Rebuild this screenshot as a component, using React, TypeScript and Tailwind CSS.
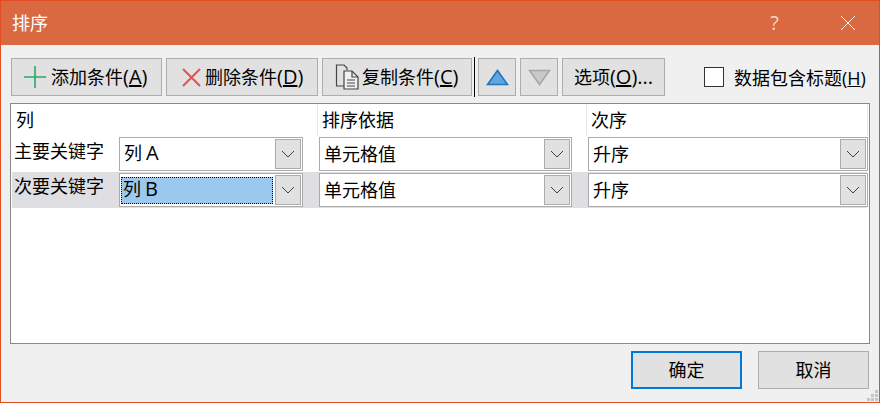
import React from 'react';

const font = { fontFamily: '"Noto Sans CJK SC", sans-serif' };

// latin letters sit a bit larger than the CJK text in the reference
const Lat: React.FC<{ children: React.ReactNode }> = ({ children }) => (
  <span className="text-[20px] leading-none" style={{ fontFamily: '"Open Sans", sans-serif' }}>{children}</span>
);

const ToolButton: React.FC<{ className: string; children: React.ReactNode }> = ({ className, children }) => (
  <button className={`h-[38px] shrink-0 flex items-center border border-[#adadad] bg-[#e1e1e1] text-[18px] leading-none text-black ${className}`}>
    {children}
  </button>
);

const Chevron = () => (
  <svg width="14" height="8" viewBox="0 0 14 8" fill="none" stroke="#404040" strokeWidth="1">
    <path d="M1 1l6 6 6-6" />
  </svg>
);

const Combo: React.FC<{ children: React.ReactNode; className: string; selected?: boolean }> = ({ children, className, selected }) => (
  <div className={`h-[34px] shrink-0 flex items-center border border-[#ababab] bg-white ${className}`}>
    <div className="flex-1 h-full flex items-center pl-[1px]">
      {selected ? (
        <span className="w-[152px] h-[27px] flex items-center pl-[2px] pb-[2px] bg-[#9bc8ee] outline-1 -outline-offset-1 outline-dotted outline-black text-[18px] leading-none text-black whitespace-pre">
          <span>{children}</span>
        </span>
      ) : (
        <span className="pl-[3px] pb-[2px] text-[18px] leading-none text-black whitespace-pre">{children}</span>
      )}
    </div>
    <div className="w-[26px] h-[30px] mr-[1px] flex items-center justify-center border border-[#ababab] bg-[#e1e1e1]">
      <Chevron />
    </div>
  </div>
);

const Row: React.FC<{ label: string; col: React.ReactNode; className: string; labelClass: string; selected?: boolean }> = ({ label, col, className, labelClass, selected }) => (
  <div className={`flex items-center ${className}`}>
    <span className={`shrink-0 text-[18px] leading-none text-black ${labelClass}`}>{label}</span>
    <Combo className="w-[184px] mr-[16px]" selected={selected}>{col}</Combo>
    <Combo className="w-[253px] mr-[16px]">单元格值</Combo>
    <Combo className="w-[280px]">升序</Combo>
  </div>
);

export default function App() {
  return (
    <div style={font} className="w-[880px] h-[403px] flex flex-col border border-[#e04e21] bg-[#f0f0f0] overflow-hidden">
      {/* Title bar */}
      <div className="h-[44px] shrink-0 flex items-center bg-[#da6841] text-white">
        <span className="ml-[11px] pb-[2px] text-[18px] leading-none">排序</span>
        <span className="ml-auto mr-[61px] text-[20px] leading-none text-[#f4d8cd]" style={{ fontFamily: '"Open Sans", sans-serif' }}>?</span>
        <svg className="mr-[23px]" width="16" height="16" viewBox="0 0 16 16" fill="none" stroke="white" strokeWidth="1">
          <path d="M1 1l14 14M15 1L1 15" />
        </svg>
      </div>

      {/* Toolbar */}
      <div className="mt-[13px] ml-[10px] flex items-center">
        <ToolButton className="w-[151px] pl-[12px]">
          <svg className="mr-[5px]" width="22" height="22" viewBox="0 0 22 22" fill="none" stroke="#2aa866" strokeWidth="1.6">
            <path d="M11 0v22M0 11h22" />
          </svg>
          <span>添加条件<Lat>(<u>A</u>)</Lat></span>
        </ToolButton>
        <ToolButton className="w-[152px] ml-[4px] pl-[15px]">
          <svg className="mr-[4px]" width="19" height="19" viewBox="0 0 19 19" fill="none" stroke="#e8504f" strokeWidth="2">
            <path d="M1 1l17 17M18 1L1 18" />
          </svg>
          <span>删除条件<Lat>(<u>D</u>)</Lat></span>
        </ToolButton>
        <ToolButton className="w-[150px] ml-[4px] pl-[12px]">
          <svg className="mr-[3px]" width="24" height="26" viewBox="0 0 24 26" fill="none" stroke="#444" strokeWidth="1.2">
            <path d="M9 22H1.5V1h7.5l3 3v2" />
            <path d="M9 7h8l6 6v12H9z" fill="#f0f0f0" />
            <path d="M17 7v6h6" />
            <path d="M12 16h8M12 19h8M12 22h8" />
          </svg>
          <span>复制条件<Lat>(<u>C</u>)</Lat></span>
        </ToolButton>
        <div className="w-[1px] h-[40px] -my-[1px] ml-[2px] mr-[3px] bg-black" />
        <ToolButton className="w-[38px] justify-center">
          <svg width="23" height="17" viewBox="0 0 23 17">
            <path d="M11.5 1.5L21.5 15.5H1.5z" fill="#5ba6e4" stroke="#2474b8" strokeWidth="1.6" />
          </svg>
        </ToolButton>
        <ToolButton className="w-[38px] ml-[4px] justify-center">
          <svg width="23" height="17" viewBox="0 0 23 17">
            <path d="M1.5 1.5H21.5L11.5 15.5z" fill="#c8c8c8" stroke="#a8a8a8" strokeWidth="1.6" />
          </svg>
        </ToolButton>
        <ToolButton className="w-[103px] ml-[4px] justify-center">
          <span>选项<Lat>(<u>O</u>)...</Lat></span>
        </ToolButton>
        <span className="w-[20px] h-[20px] ml-[39px] border border-[#333] bg-white shrink-0" />
        <span className="ml-[10px] text-[18px] leading-none text-black whitespace-nowrap">数据包含标题<span className="text-[18px]" style={{ fontFamily: '"Open Sans", sans-serif' }}>(<u>H</u>)</span></span>
      </div>

      {/* Sort levels */}
      <div className="mt-[7px] ml-[9px] w-[860px] h-[241px] shrink-0 border border-[#8a8a8a] bg-white">
        <div className="h-[32px] w-[857px] flex items-center text-[18px] leading-none text-black">
          <span className="w-[307px] h-full flex items-center pl-[5px] pb-[2px] border-r border-[#e6e6e6]">列</span>
          <span className="w-[269px] h-full flex items-center pl-[4px] pb-[2px] border-r border-[#e6e6e6]">排序依据</span>
          <span className="w-[281px] h-full flex items-center pl-[4px] pb-[2px] border-r border-[#e6e6e6]">次序</span>
        </div>
        <Row label="主要关键字" col={<>列 <Lat>A</Lat></>} className="h-[35px] mb-[1px] pl-[1px] pt-[1px]" labelClass="w-[107px] pl-[2px] -mt-[8px]" />
        <Row label="次要关键字" col={<>列 <Lat>B</Lat></>} className="h-[36px] w-[855px] ml-[1px] bg-[#dfdee3]" labelClass="w-[107px] pl-[2px] -mt-[10px]" selected />
      </div>

      {/* Footer */}
      <div className="mt-[7px] ml-[630px] flex items-center">
        <button className="w-[111px] h-[38px] pb-[2px] border-2 border-[#0078d7] bg-[#e1e1e1] text-[18px] leading-none text-black">确定</button>
        <button className="w-[111px] h-[38px] pb-[2px] ml-[16px] border border-[#adadad] bg-[#e1e1e1] text-[18px] leading-none text-black">取消</button>
      </div>

      {/* Resize grip */}
      <div className="relative flex-1">
        <svg className="absolute right-[0px] bottom-[0px]" width="12" height="12" viewBox="0 0 12 12" fill="#c4c4c4">
          <rect x="8" y="0" width="3" height="3" />
          <rect x="4" y="4" width="3" height="3" />
          <rect x="8" y="4" width="3" height="3" />
          <rect x="0" y="8" width="3" height="3" />
          <rect x="4" y="8" width="3" height="3" />
          <rect x="8" y="8" width="3" height="3" />
        </svg>
      </div>
    </div>
  );
}
